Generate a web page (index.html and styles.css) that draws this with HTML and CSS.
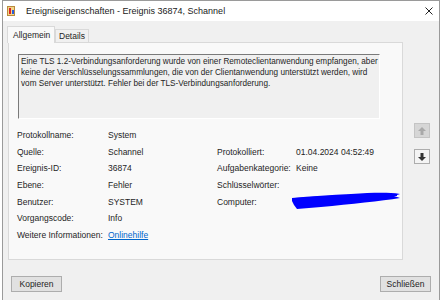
FILE: index.html
```html
<html>
<head><title>Ereigniseigenschaften</title>
<meta content="text/html;charset=utf-8" http-equiv="Content-Type" />
<link rel="stylesheet" href="styles.css">
</head>
<body>
<div class="window">
	<div class="titlebar">
		<svg class="appicon" width="9" height="10" viewBox="0 0 9 10">
			<rect x="0" y="0" width="8" height="10" fill="#b98a3c"/>
			<rect x="1" y="1" width="6" height="8" fill="#f3d58a"/>
			<rect x="2" y="2" width="2" height="6" fill="#d22"/>
			<rect x="5" y="4" width="2" height="4" fill="#2a5bd7"/>
		</svg>
		<span class="title">Ereigniseigenschaften - Ereignis 36874, Schannel</span>
		<svg class="close" width="8" height="8" viewBox="0 0 8 8">
			<path d="M0.5 0.5 L7.5 7.5 M7.5 0.5 L0.5 7.5" stroke="#222" stroke-width="1" fill="none"/>
		</svg>
	</div>
	<div class="dialog">
		<div class="tabs">
			<span class="tab active">Allgemein</span>
			<span class="tab">Details</span>
		</div>
		<div class="content">
			<div class="panel">
				<div class="desc">Eine TLS 1.2-Verbindungsanforderung wurde von einer Remoteclientanwendung empfangen, aber<br>keine der Verschlüsselungssammlungen, die von der Clientanwendung unterstützt werden, wird<br>vom Server unterstützt. Fehler bei der TLS-Verbindungsanforderung.</div>
				<div class="props">
					<span>Protokollname:</span><span>System</span><span></span><span></span>
					<span>Quelle:</span><span>Schannel</span><span>Protokolliert:</span><span>01.04.2024 04:52:49</span>
					<span>Ereignis-ID:</span><span>36874</span><span>Aufgabenkategorie:</span><span>Keine</span>
					<span>Ebene:</span><span>Fehler</span><span>Schlüsselwörter:</span><span></span>
					<span>Benutzer:</span><span>SYSTEM</span><span>Computer:</span><span class="redacted">
						<svg class="scribble" width="110" height="19" viewBox="0 0 110 19">
							<path d="M1 6 C 20 4, 40 3, 60 2 C 80 1, 95 0, 109 2 L 103 4 L 109 6 C 90 9, 60 12, 30 15 L 6 17 L 3 13 L 1 9 Z" fill="#0000ff"/>
							<path d="M4 7 C 30 5, 70 3, 106 3" stroke="#0000ff" stroke-width="2" fill="none"/>
						</svg>
					</span>
					<span>Vorgangscode:</span><span>Info</span><span></span><span></span>
					<span>Weitere Informationen:</span><span><a href="#">Onlinehilfe</a></span><span></span><span></span>
				</div>
			</div>
			<div class="nav">
				<div class="navbtn disabled">
					<svg width="8" height="8" viewBox="0 0 8 8"><path d="M4 0 L8 4 L5.5 4 L5.5 8 L2.5 8 L2.5 4 L0 4 Z" fill="#a9a9a9"/></svg>
				</div>
				<div class="navbtn">
					<svg width="8" height="8" viewBox="0 0 8 8"><path d="M4 8 L8 4 L5.5 4 L5.5 0 L2.5 0 L2.5 4 L0 4 Z" fill="#333"/></svg>
				</div>
			</div>
		</div>
		<div class="footer">
			<button>Kopieren</button>
			<button>Schließen</button>
		</div>
	</div>
</div>
</body>
</html>
```
FILE: styles.css
```css
body{
	margin:0;
	padding:0;
	background-color:#fff;
	font-family: "Liberation Sans", Arial, sans-serif;
	font-size:9px;
	color:#1e1e1e;
}

.window{
	margin-left:2px;
	width:436px;
	height:299px;
	border:1px solid #9a9a9a;
	border-bottom:0;
	background-color:#f0f0f0;
}

.titlebar{
	height:20px;
	background-color:#fff;
	display:flex;
	align-items:center;
}

.appicon{
	margin-left:4px;
	margin-right:10px;
}

.title{
	flex:1;
	color:#1a1a1a;
	white-space:nowrap;
}

.close{
	margin-right:6px;
}

.tabs{
	height:21px;
	display:flex;
	align-items:flex-end;
	padding-left:4px;
	font-size:8.5px;
}

.tab{
	height:13px;
	line-height:12px;
	padding:0 3px;
	border:1px solid #d9d9d9;
	border-bottom:0;
	box-sizing:border-box;
	background-color:#f0f0f0;
	white-space:nowrap;
}

.tab.active{
	width:48px;
	height:17px;
	line-height:16px;
	padding:0 0 0 5px;
	margin-bottom:-1px;
	background-color:#f9f9f9;
	position:relative;
}

.content{
	display:flex;
}

.panel{
	margin-left:5px;
	width:395px;
	height:218px;
	box-sizing:border-box;
	border:1px solid #d9d9d9;
	background-color:#f9f9f9;
}

.desc{
	margin:11px 0 0 9px;
	width:362px;
	height:65px;
	box-sizing:border-box;
	padding:1px 2px;
	font-size:8.2px;
	line-height:11px;
	white-space:nowrap;
	overflow:hidden;
	border:1px solid;
	border-color:#7a7a7a #fff #fff #7a7a7a;
	background-color:#f0f0f0;
}

.props{
	margin:8px 0 0 8px;
	display:grid;
	grid-template-columns:91px 109px 79px 1fr;
	grid-auto-rows:16.6px;
	align-items:center;
	font-size:8.5px;
	white-space:nowrap;
}

.props a{
	color:#0066cc;
}

.redacted{
	position:relative;
	height:100%;
}

.scribble{
	position:absolute;
	left:-5px;
	top:-1px;
}

.nav{
	margin-left:11px;
	padding-top:81px;
}

.navbtn{
	width:16px;
	height:15px;
	box-sizing:border-box;
	border:1px solid #adadad;
	background-color:#f4f4f4;
	display:flex;
	align-items:center;
	justify-content:center;
	margin-bottom:11px;
}

.navbtn.disabled{
	background-color:#d6d6d6;
	border-color:#c4c4c4;
}

.footer{
	display:flex;
	justify-content:space-between;
	padding:16px 8px 0 8px;
}

button{
	width:51px;
	height:16px;
	padding:0;
	border:1px solid #adadad;
	background-color:#e1e1e1;
	font-family: "Liberation Sans", Arial, sans-serif;
	font-size:8.5px;
	color:#1e1e1e;
}
```
